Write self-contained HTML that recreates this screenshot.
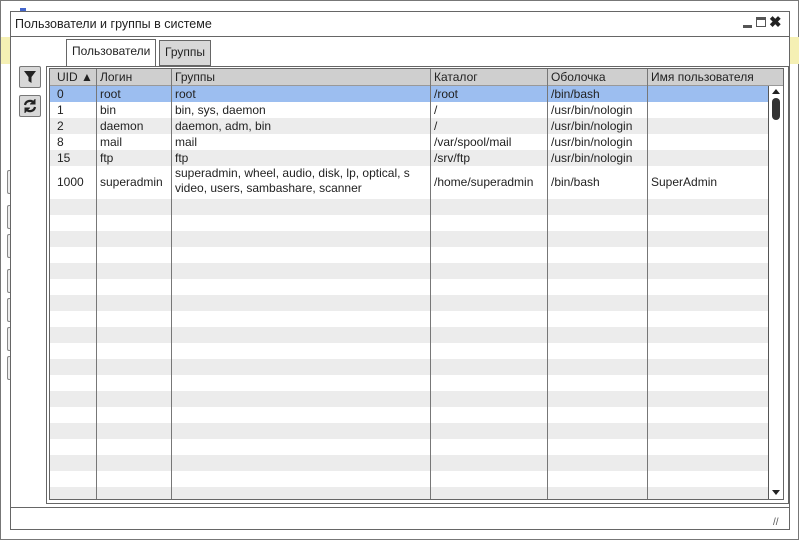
<!DOCTYPE html>
<html><head><meta charset="utf-8"><style>
*{box-sizing:border-box;margin:0;padding:0}
body{width:800px;height:540px;position:relative;background:#fff;font-family:"Liberation Sans",sans-serif;font-size:12px;color:#222;overflow:hidden}
.a{position:absolute}
.bg{left:0;top:0;width:799px;height:540px;border:1px solid #777}
.yl{background:#f5f0b4}
.dlg{left:10px;top:11px;width:780px;height:519px;border:1px solid #666;background:#fff}
.title{left:0;top:0;width:778px;height:25px;border-bottom:1px solid #666;padding:5px 0 0 4px;font-size:12.5px}
.tab{border:1px solid #666;border-bottom:none;padding:4px 5px;font-size:12px}
.panel{left:35px;top:54px;width:743px;height:438px;border:1px solid #666}
.grid{left:38px;top:56px;width:735px;height:432px;border:1px solid #666;overflow:hidden}
.hdr{left:0;top:0;width:733px;height:17px;background:#cfcfcf;border-bottom:1px solid #999}
.row{position:absolute;left:0;width:718px;height:16px}
.c{position:absolute;top:0;white-space:nowrap;line-height:16px}
.vl{position:absolute;top:0;width:1px;height:432px;background:#777}
.btn{width:22px;height:22px;border:1px solid #777;border-radius:2px;background:#d8d8d8}
.sb{left:718px;top:17px;width:15px;height:414px;border-left:1px solid #555;background:#fff}
.lp{left:7px;width:4px;height:24px;border:1px solid #888;border-right:none;border-radius:2px 0 0 2px;background:#eee}
</style></head><body>
<div class="a bg"></div>
<div class="a yl" style="left:1px;top:37px;width:10px;height:27px"></div>
<div class="a yl" style="left:790px;top:37px;width:9px;height:27px"></div>
<div class="a" style="left:20px;top:8px;width:6px;height:3px;background:#46c"></div>
<div class="a lp" style="top:170px"></div><div class="a lp" style="top:205px"></div><div class="a lp" style="top:234px"></div><div class="a lp" style="top:269px"></div><div class="a lp" style="top:298px"></div><div class="a lp" style="top:327px"></div><div class="a lp" style="top:356px"></div>
<div class="a dlg">
 <div class="a title">Пользователи и группы в системе</div>
 <div class="a" style="left:732px;top:13px;width:9px;height:3px;background:#555"></div>
 <div class="a" style="left:745px;top:5px;width:10px;height:10px;border:1px solid #555;border-top:3px solid #555"></div>
 <div class="a" style="left:758px;top:1px;font-size:15px;font-weight:bold;color:#222">✖</div>
 <div class="a tab" style="left:55px;top:27px;height:28px;background:#fff">Пользователи</div>
 <div class="a tab" style="left:148px;top:28px;height:26px;background:#d8d8d8;border-bottom:1px solid #666">Группы</div>
 <div class="a panel"></div>
 <div class="a btn" style="left:8px;top:54px"><svg width="20" height="20"><path d="M4 4h12l-4.5 6v6l-3 -2v-4z" fill="#222"/></svg></div>
 <div class="a btn" style="left:8px;top:83px"><svg width="20" height="20" fill="none" stroke="#222" stroke-width="2.2"><path d="M5 9a5 5 0 0 1 9-2"/><path d="M15 11a5 5 0 0 1-9 2"/><path d="M15 3v5h-5" fill="#222" stroke-width="1"/><path d="M5 17v-5h5" fill="#222" stroke-width="1"/></svg></div>
 <div class="a grid">
  <div class="a hdr"></div>
  <div class="c" style="left:7px;top:0">UID ▲</div><div class="c" style="left:50px">Логин</div><div class="c" style="left:125px">Группы</div><div class="c" style="left:384px">Каталог</div><div class="c" style="left:501px">Оболочка</div><div class="c" style="left:601px">Имя пользователя</div>
  <div class="row" style="top:17px;background:#9cbef0"><div class="c" style="left:7px">0</div><div class="c" style="left:50px">root</div><div class="c" style="left:125px">root</div><div class="c" style="left:384px">/root</div><div class="c" style="left:501px">/bin/bash</div></div>
  <div class="row" style="top:33px"><div class="c" style="left:7px">1</div><div class="c" style="left:50px">bin</div><div class="c" style="left:125px">bin, sys, daemon</div><div class="c" style="left:384px">/</div><div class="c" style="left:501px">/usr/bin/nologin</div></div>
  <div class="row" style="top:49px;background:#ececec"><div class="c" style="left:7px">2</div><div class="c" style="left:50px">daemon</div><div class="c" style="left:125px">daemon, adm, bin</div><div class="c" style="left:384px">/</div><div class="c" style="left:501px">/usr/bin/nologin</div></div>
  <div class="row" style="top:65px"><div class="c" style="left:7px">8</div><div class="c" style="left:50px">mail</div><div class="c" style="left:125px">mail</div><div class="c" style="left:384px">/var/spool/mail</div><div class="c" style="left:501px">/usr/bin/nologin</div></div>
  <div class="row" style="top:81px;background:#ececec"><div class="c" style="left:7px">15</div><div class="c" style="left:50px">ftp</div><div class="c" style="left:125px">ftp</div><div class="c" style="left:384px">/srv/ftp</div><div class="c" style="left:501px">/usr/bin/nologin</div></div>
  <div class="row" style="top:97px;height:33px;overflow:hidden"><div class="c" style="left:7px;top:8px">1000</div><div class="c" style="left:50px;top:8px">superadmin</div><div class="c" style="left:125px;top:0;line-height:15px">superadmin, wheel, audio, disk, lp, optical, s<br>video, users, sambashare, scanner</div><div class="c" style="left:384px;top:8px">/home/superadmin</div><div class="c" style="left:501px;top:8px">/bin/bash</div><div class="c" style="left:601px;top:8px">SuperAdmin</div></div>
  <div class="a" style="left:0;top:130px;width:718px;height:302px;background:repeating-linear-gradient(#ececec 0 16px,#fff 16px 32px)"></div>
  <div class="vl" style="left:46px"></div><div class="vl" style="left:121px"></div><div class="vl" style="left:380px"></div><div class="vl" style="left:497px"></div><div class="vl" style="left:597px"></div>
  <div class="a sb"><div class="a" style="left:3px;top:3px;width:0;height:0;border:4px solid transparent;border-bottom:5px solid #222;border-top:none"></div><div class="a" style="left:3px;top:12px;width:8px;height:22px;border-radius:4px;background:#333"></div><div class="a" style="left:3px;top:404px;width:0;height:0;border:4px solid transparent;border-top:5px solid #222;border-bottom:none"></div></div>
 </div>
 <div class="a" style="left:0;top:495px;width:778px;height:1px;background:#666"></div>
 <div class="a" style="left:762px;top:505px;font-size:10px;color:#555">//</div>
</div>
</body></html>
